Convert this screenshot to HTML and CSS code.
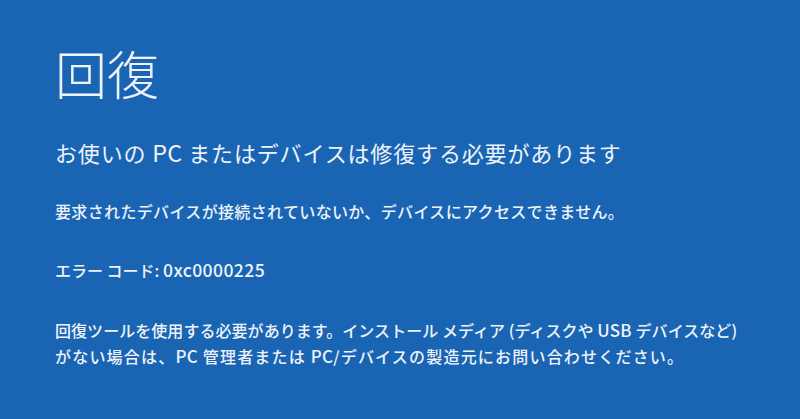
FILE: index.html
```html
<!DOCTYPE html>
<html lang="ja">
<head>
<meta charset="utf-8">
<link rel="stylesheet" href="styles.css">
</head>
<body>
<main class="screen">
  <h1 class="title">回復</h1>
  <p class="lead">お使いの <span class="lat">PC</span> またはデバイスは修復する必要があります</p>
  <p class="text line1 gap-a">要求されたデバイスが接続されていないか、デバイスにアクセスできません。</p>
  <p class="text err gap-b">エラー コード: <span class="code">0xc0000225</span></p>
  <p class="text para gap-b"><span class="row1">回復ツールを使用する必要があります。インストール メディア (ディスクや <span class="lat">USB</span> デバイスなど)</span><br><span class="row2">がない場合は、<span class="lat">PC</span> 管理者または <span class="lat">PC</span>/デバイスの製造元にお問い合わせください。</span></p>
</main>
</body>
</html>
```
FILE: styles.css
```css
html, body {
  margin: 0;
  padding: 0;
  background: #1a65b3;
}
.screen {
  width: 800px;
  height: 419px;
  box-sizing: border-box;
  padding: 43px 0 0 55px;
  background: #1a65b3;
  color: #eef3fa;
  font-family: "Noto Sans CJK JP", "Noto Sans", sans-serif;
  overflow: hidden;
}
.title {
  margin: 0;
  font-size: 52px;
  line-height: 60px;
  font-weight: 300;
}
.lead {
  margin: 34px 0 0;
  font-size: 22px;
  line-height: 30px;
  font-weight: 400;
  letter-spacing: 0.85px;
}
.text {
  margin: 0;
  font-size: 16px;
  line-height: 24px;
  font-weight: 500;
}
.lat {
  font-size: 1.06em;
  line-height: 1;
  letter-spacing: 0.3px;
}
.code {
  font-size: 1.1em;
  line-height: 1;
  letter-spacing: 0.4px;
}
.line1 { letter-spacing: 0.35px; }
.gap-a { margin-top: 32px; }
.gap-b { margin-top: 35px; }
.para { line-height: 26px; white-space: nowrap; }
.row1 { letter-spacing: 0.05px; }
.row2 { letter-spacing: 1.2px; }
```
